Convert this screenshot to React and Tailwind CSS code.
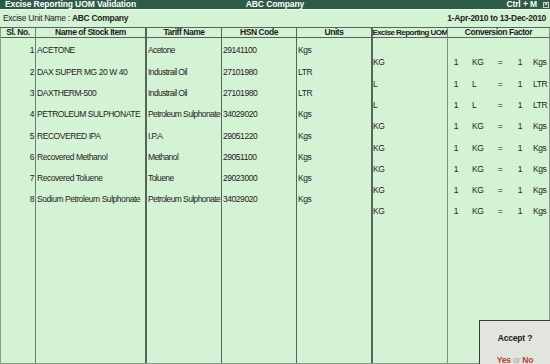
import React from "react";

const rows = [
  ["1", "ACETONE", "Acetone", "29141100", "Kgs", "KG", "KG", "Kgs"],
  ["2", "DAX SUPER MG 20 W 40", "Industrail Oil", "27101980", "LTR", "L", "L", "LTR"],
  ["3", "DAXTHERM-500", "Industrail Oil", "27101980", "LTR", "L", "L", "LTR"],
  ["4", "PETROLEUM SULPHONATE", "Petroleum Sulphonate", "34029020", "Kgs", "KG", "KG", "Kgs"],
  ["5", "RECOVERED IPA", "I.P.A", "29051220", "Kgs", "KG", "KG", "Kgs"],
  ["6", "Recovered Methanol", "Methanol", "29051100", "Kgs", "KG", "KG", "Kgs"],
  ["7", "Recovered Toluene", "Toluene", "29023000", "Kgs", "KG", "KG", "Kgs"],
  ["8", "Sodium Petroleum Sulphonate", "Petroleum Sulphonate", "34029020", "Kgs", "KG", "KG", "Kgs"],
];

function Head({ children, className = "" }) {
  return (
    <div className={"h-[10px] border-b border-[#55655a] flex items-center justify-center font-bold whitespace-nowrap overflow-hidden leading-none " + className}>
      {children}
    </div>
  );
}

function Cell({ children, className = "" }) {
  return (
    <div className={"h-[21.3px] flex items-center whitespace-nowrap overflow-hidden leading-none " + className}>
      {children}
    </div>
  );
}

export default function App() {
  return (
    <div
      className="w-[550px] h-[364px] bg-[#d4f2d4] text-[#1e241e] text-[8.5px] tracking-[-0.45px] relative overflow-hidden flex flex-col"
      style={{ fontFamily: '"Liberation Sans", Arial, sans-serif' }}
    >
      {/* Title bar */}
      <div className="h-[9px] bg-[#2e5a48] text-white font-bold grid grid-cols-3 items-center leading-none px-[5px] text-[8.5px] tracking-[-0.1px]">
        <span className="whitespace-nowrap">Excise Reporting UOM Validation</span>
        <span className="text-center whitespace-nowrap">ABC Company</span>
        <span className="flex justify-end items-center gap-[6px] whitespace-nowrap">
          <span>Ctrl + M</span>
          <span className="w-[6px] h-[6px] border border-[#c8d0c8] flex items-center justify-center text-[5px] leading-none -mr-[4px]">×</span>
        </span>
      </div>
      <div className="h-[1px] bg-[#eef8ee]" />

      {/* Unit row */}
      <div className="h-[17px] flex items-center justify-between px-[3px] pr-[4px] leading-none tracking-[-0.3px]">
        <span>
          Excise Unit Name : <span className="font-bold">ABC Company</span>
        </span>
        <span className="font-bold">1-Apr-2010 to 13-Dec-2010</span>
      </div>

      {/* Table */}
      <div className="flex-1 flex border-t border-[#55655a] border-b border-b-[#8a9a8a]">
        <div className="w-[36px] border-l border-l-[#8a9a8a] border-r border-[#6d7d6d] flex flex-col">
          <Head>Sl. No.</Head>
          <div className="pt-[2px] flex flex-col">
            {rows.map((r) => (
              <Cell key={r[0]} className="justify-end pr-[1px]">{r[0]}</Cell>
            ))}
          </div>
        </div>
        <div className="w-[111px] border-r-2 border-[#55655a] flex flex-col">
          <Head>Name of Stock Item</Head>
          <div className="pt-[2px] flex flex-col">
            {rows.map((r) => (
              <Cell key={r[0]} className="pl-[1px]">{r[1]}</Cell>
            ))}
          </div>
        </div>
        <div className="w-[75px] border-r border-[#55655a] flex flex-col">
          <Head>Tariff Name</Head>
          <div className="pt-[2px] flex flex-col">
            {rows.map((r) => (
              <Cell key={r[0]} className="pl-[1px] tracking-[-0.6px]">{r[2]}</Cell>
            ))}
          </div>
        </div>
        <div className="w-[75px] border-r border-[#55655a] flex flex-col">
          <Head>HSN Code</Head>
          <div className="pt-[2px] flex flex-col">
            {rows.map((r) => (
              <Cell key={r[0]} className="pl-[1px]">{r[3]}</Cell>
            ))}
          </div>
        </div>
        <div className="w-[76px] border-r-2 border-[#55655a] flex flex-col">
          <Head>Units</Head>
          <div className="pt-[2px] flex flex-col">
            {rows.map((r) => (
              <Cell key={r[0]} className="pl-[1px]">{r[4]}</Cell>
            ))}
          </div>
        </div>
        <div className="w-[75px] border-r border-[#7d8d7d] flex flex-col">
          <Head className="text-[8px] tracking-[-0.55px]">Excise Reporting UOM</Head>
          <div className="pt-[14px] flex flex-col">
            {rows.map((r) => (
              <Cell key={r[0]}>{r[5]}</Cell>
            ))}
          </div>
        </div>
        <div className="flex-1 border-r border-[#8a9a8a] flex flex-col">
          <Head>Conversion Factor</Head>
          <div className="pt-[14px] flex flex-col">
            {rows.map((r) => (
              <Cell key={r[0]}>
                <span className="w-[10px] text-right">1</span>
                <span className="w-[20px] ml-[14px]">{r[6]}</span>
                <span className="w-[16px] text-center">=</span>
                <span className="w-[14px] text-right">1</span>
                <span className="ml-[11px]">{r[7]}</span>
              </Cell>
            ))}
          </div>
        </div>
      </div>

      {/* Accept box */}
      <div className="absolute right-0 bottom-0 w-[71px] h-[44px] bg-[#e2e4de] border-l border-t border-[#3a3a3a] flex flex-col items-center leading-none tracking-[-0.2px]">
        <div className="mt-[13px] font-bold text-[#1a1a1a]">Accept ?</div>
        <div className="mt-[13px] font-bold text-[#a8483a]">
          Yes <span className="font-normal text-[#9aaa9a]">or</span> No
        </div>
      </div>
    </div>
  );
}
